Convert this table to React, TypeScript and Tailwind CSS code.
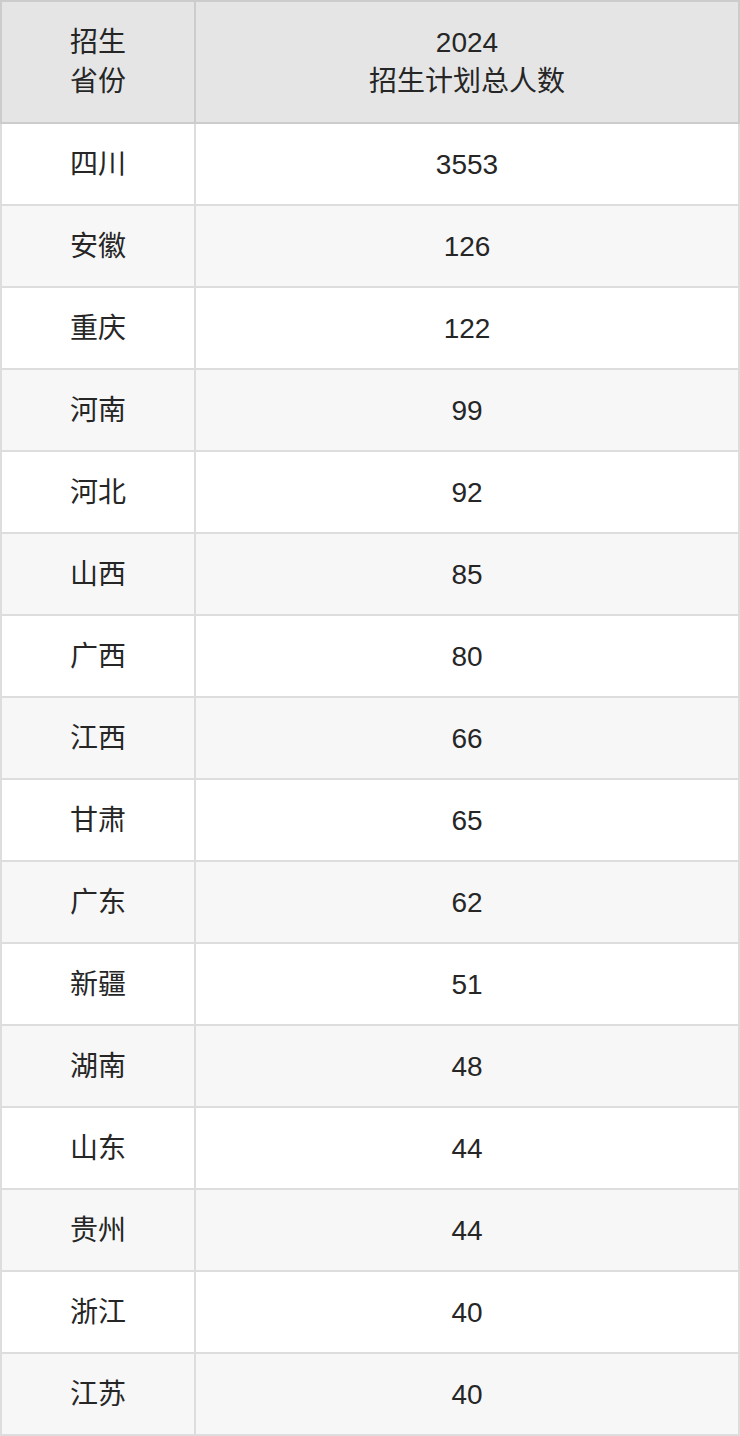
const rows: [string, string][] = [
  ["四川", "3553"],
  ["安徽", "126"],
  ["重庆", "122"],
  ["河南", "99"],
  ["河北", "92"],
  ["山西", "85"],
  ["广西", "80"],
  ["江西", "66"],
  ["甘肃", "65"],
  ["广东", "62"],
  ["新疆", "51"],
  ["湖南", "48"],
  ["山东", "44"],
  ["贵州", "44"],
  ["浙江", "40"],
  ["江苏", "40"],
];

export default function App() {
  return (
    <div
      className="w-[740px] bg-white text-[#262626] text-[28px] leading-[39px]"
      style={{ fontFamily: '"Liberation Sans", "Noto Sans CJK SC", sans-serif' }}
    >
      <table className="w-[740px] border-collapse table-fixed">
        <colgroup>
          <col className="w-[194px]" />
          <col />
        </colgroup>
        <thead>
          <tr className="bg-[#e5e5e5]">
            <th className="h-[122px] border-2 border-[#cccccc] font-normal text-center">
              招生
              <br />
              省份
            </th>
            <th className="h-[122px] border-2 border-[#cccccc] font-normal text-center">
              2024
              <br />
              招生计划总人数
            </th>
          </tr>
        </thead>
        <tbody>
          {rows.map(([prov, num], i) => (
            <tr key={prov + i} className={i % 2 === 1 ? "bg-[#f7f7f7]" : "bg-white"}>
              <td className="h-[82px] border-2 border-[#dddddd] text-center">{prov}</td>
              <td className="h-[82px] border-2 border-[#dddddd] text-center">{num}</td>
            </tr>
          ))}
        </tbody>
      </table>
    </div>
  );
}
